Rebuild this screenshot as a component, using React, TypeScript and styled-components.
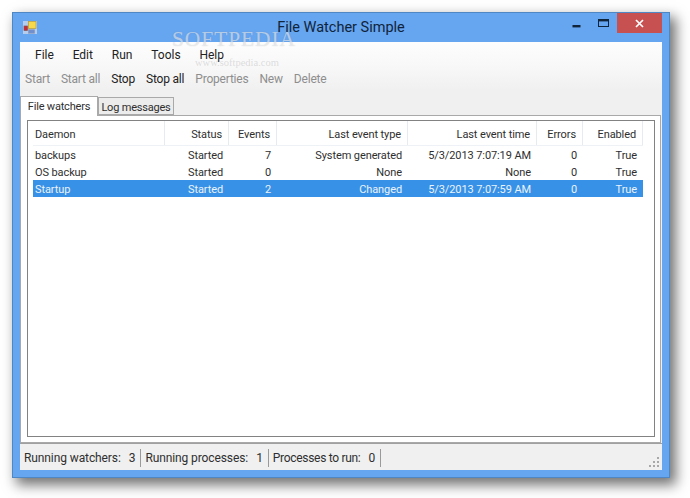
import styled, { createGlobalStyle } from "styled-components"

const Global = createGlobalStyle`
    html, body {
        margin: 0;
        padding: 0;
        background: #fff;
    }
    body {
        font-family: Roboto, "Liberation Sans", sans-serif;
        font-size: 12px;
        letter-spacing: -0.1px;
        color: #2f2f2f;
    }
`

const Page = styled.div`
    width: 690px;
    height: 498px;
    padding: 12px 0 0 12px;
    box-sizing: border-box;
    overflow: hidden;
    position: relative;
`

const Window = styled.div`
    width: 658px;
    height: 466px;
    box-sizing: border-box;
    display: flex;
    flex-direction: column;
    background: #66a5f0;
    border: 1px solid #4f86c4;
    box-shadow: 5px 6px 12px 1px rgba(0, 0, 0, 0.55);
    padding: 0 7px 7px;
`

const TitleBar = styled.div`
    height: 29px;
    flex: none;
    display: flex;
    align-items: flex-start;
    position: relative;
`

const AppIcon = styled.svg`
    width: 14px;
    height: 14px;
    margin: 8px 0 0 3px;
`

const Title = styled.div`
    position: absolute;
    left: 0;
    right: 0;
    top: 5px;
    text-align: center;
    font-size: 14.5px;
    letter-spacing: 0;
    line-height: 20px;
    color: #10243a;
`

const Controls = styled.div`
    margin-left: auto;
    display: flex;
    align-items: flex-start;
`

const ControlButton = styled.div<{ $close?: boolean }>`
    width: ${p => (p.$close ? 45 : 27)}px;
    height: 20px;
    display: flex;
    align-items: center;
    justify-content: center;
    background: ${p => (p.$close ? "#c75050" : "transparent")};
`

const Client = styled.div`
    flex: 1;
    min-height: 0;
    display: flex;
    flex-direction: column;
    background: #f0f0f0;
`

const TopBars = styled.div`
    height: 48px;
    flex: none;
    padding-top: 1px;
    box-sizing: border-box;
    background: linear-gradient(#fdfdfd 0%, #f8f8f8 50%, #f0f0f0 100%);
`

const MenuBar = styled.div`
    height: 24px;
    display: flex;
    align-items: center;
    padding-left: 15px;
    gap: 18.8px;
    letter-spacing: 0;
    color: #222;
`

const MenuItem = styled.span``

const ToolBar = styled.div`
    height: 23px;
    display: flex;
    align-items: center;
    padding-left: 5px;
    gap: 11px;
    letter-spacing: -0.2px;
`

const ToolButton = styled.span<{ $off?: boolean }>`
    color: ${p => (p.$off ? "#8e8e8e" : "#222")};
`

const Tabs = styled.div`
    flex: none;
    height: 25px;
    display: flex;
    align-items: flex-end;
    padding-top: 6px;
    box-sizing: border-box;
    font-size: 11px;
    letter-spacing: -0.2px;
`

const Tab = styled.div<{ $active?: boolean }>`
    box-sizing: border-box;
    height: ${p => (p.$active ? 20 : 18)}px;
    width: ${p => (p.$active ? 78 : 76)}px;
    margin-bottom: ${p => (p.$active ? -1 : 0)}px;
    padding: ${p => (p.$active ? "0 0 1px" : "2px 0 0")};
    display: flex;
    align-items: center;
    justify-content: center;
    white-space: nowrap;
    background: ${p => (p.$active ? "#fff" : "#ececec")};
    border: 1px solid #a9a9a9;
    border-bottom: ${p => (p.$active ? "none" : "1px solid #a9a9a9")};
    position: relative;
    z-index: ${p => (p.$active ? 1 : 0)};
`

const TabPanel = styled.div`
    flex: 1;
    min-height: 0;
    background: #fff;
    border: 1px solid #a9a9a9;
    margin-right: 1px;
    padding: 4px 5px 5px 6px;
    display: flex;
`

const List = styled.div`
    flex: 1;
    border: 1px solid #828282;
    padding: 0 11px 0 5px;
    background: #fff;
    font-size: 11px;
`

const Row = styled.div<{ $head?: boolean; $selected?: boolean }>`
    display: grid;
    grid-template-columns: 132px 64px 48px 131px 129px 46px 60px;
    height: ${p => (p.$head ? 24 : 17)}px;
    align-items: stretch;
    background: ${p => (p.$selected ? "#3791e6" : "transparent")};
    color: ${p => (p.$selected ? "#eaf3fc" : "#2f2f2f")};
    border-bottom: ${p => (p.$head ? "1px solid #eef2f6" : "none")};
`

const Cell = styled.div<{ $head?: boolean; $left?: boolean }>`
    display: flex;
    align-items: center;
    justify-content: ${p => (p.$left ? "flex-start" : "flex-end")};
    padding: ${p => (p.$left ? "0 0 0 2px" : "0 6px 0 0")};
    padding-top: ${p => (p.$head ? 2 : 1)}px;
    white-space: nowrap;
    border-right: ${p => (p.$head ? "1px solid #e6ebf0" : "none")};
    box-sizing: border-box;
`

const StatusBar = styled.div`
    height: 27px;
    flex: none;
    border-top: 1px solid #a0a0a0;
    display: flex;
    align-items: center;
    padding: 1px 0 0 4px;
    box-sizing: border-box;
    position: relative;
    background: #f0f0f0;
`

const StatusPane = styled.div<{ $tight?: boolean }>`
    height: 18px;
    box-sizing: border-box;
    display: flex;
    align-items: center;
    gap: 8px;
    padding: 1px 5px 0 0;
    margin-right: 4px;
    border-right: 1px solid #9a9a9a;
    white-space: nowrap;
    letter-spacing: ${p => (p.$tight ? "-0.3px" : "-0.1px")};
`

const Grip = styled.svg`
    position: absolute;
    right: 1px;
    bottom: 1px;
    width: 12px;
    height: 12px;
`

const Watermark = styled.div`
    position: absolute;
    left: 172px;
    top: 27px;
    font-family: "Liberation Serif", serif;
    font-size: 21.5px;
    letter-spacing: 0.9px;
    line-height: 24px;
    color: rgba(255, 255, 255, 0.5);
    text-shadow: 0 0 1px rgba(120, 130, 140, 0.4);
    pointer-events: none;
`

const WatermarkUrl = styled.div`
    position: absolute;
    left: 195px;
    top: 56px;
    font-family: "Liberation Serif", serif;
    font-size: 10.5px;
    letter-spacing: 0;
    line-height: 14px;
    color: rgba(150, 150, 150, 0.3);
    pointer-events: none;
`

const columns = ["Daemon", "Status", "Events", "Last event type", "Last event time", "Errors", "Enabled"]

const rows = [
    ["backups", "Started", "7", "System generated", "5/3/2013 7:07:19 AM", "0", "True"],
    ["OS backup", "Started", "0", "None", "None", "0", "True"],
    ["Startup", "Started", "2", "Changed", "5/3/2013 7:07:59 AM", "0", "True"],
]

const tools: [string, boolean][] = [
    ["Start", true],
    ["Start all", true],
    ["Stop", false],
    ["Stop all", false],
    ["Properties", true],
    ["New", true],
    ["Delete", true],
]

const App = () => {
    return (
        <Page>
            <Global />
            <Window>
                <TitleBar>
                    <AppIcon viewBox="0 0 14 14">
                        <rect x="0" y="0" width="14" height="13" fill="#c9d6e8" opacity="0.8" />
                        <rect x="1" y="5" width="3.5" height="4.5" fill="#d8232a" stroke="#7a5a5a" strokeWidth="0.7" />
                        <rect x="5.5" y="0.5" width="7.5" height="7" fill="#f5d94a" stroke="#b39a3a" strokeWidth="0.7" />
                        <rect x="5.5" y="8.8" width="6" height="3.4" fill="#6f8fd0" stroke="#8a9ab8" strokeWidth="0.7" />
                    </AppIcon>
                    <Title>File Watcher Simple</Title>
                    <Controls>
                        <ControlButton>
                            <svg width="9" height="20" viewBox="0 0 9 20"><rect x="0.5" y="12" width="8" height="2.4" fill="#10243a" /></svg>
                        </ControlButton>
                        <ControlButton>
                            <svg width="11" height="20" viewBox="0 0 11 20"><rect x="0.5" y="6.5" width="10" height="7" fill="none" stroke="#10243a" /><rect x="0" y="6" width="11" height="2.4" fill="#10243a" /></svg>
                        </ControlButton>
                        <ControlButton $close>
                            <svg width="9" height="9" viewBox="0 0 9 9"><path d="M1 1L8 8M8 1L1 8" stroke="#fff" strokeWidth="1.7" /></svg>
                        </ControlButton>
                    </Controls>
                </TitleBar>
                <Client>
                    <TopBars>
                        <MenuBar>
                            {["File", "Edit", "Run", "Tools", "Help"].map(m => <MenuItem key={m}>{m}</MenuItem>)}
                        </MenuBar>
                        <ToolBar>
                            {tools.map(([name, off]) => <ToolButton key={name} $off={off}>{name}</ToolButton>)}
                        </ToolBar>
                    </TopBars>
                    <Tabs>
                        <Tab $active>File watchers</Tab>
                        <Tab>Log messages</Tab>
                    </Tabs>
                    <TabPanel>
                        <List>
                            <Row $head>
                                {columns.map((c, i) => <Cell key={c} $head $left={i === 0}>{c}</Cell>)}
                            </Row>
                            {rows.map((r, i) => (
                                <Row key={r[0]} $selected={i === 2}>
                                    {r.map((v, j) => <Cell key={j} $left={j === 0}>{v}</Cell>)}
                                </Row>
                            ))}
                        </List>
                    </TabPanel>
                    <StatusBar>
                        <StatusPane><span>Running watchers:</span><span>3</span></StatusPane>
                        <StatusPane><span>Running processes:</span><span>1</span></StatusPane>
                        <StatusPane $tight><span>Processes to run:</span><span>0</span></StatusPane>
                        <Grip viewBox="0 0 12 12" fill="#a8a8a8">
                            <rect x="8" y="0" width="2" height="2" />
                            <rect x="4" y="4" width="2" height="2" />
                            <rect x="8" y="4" width="2" height="2" />
                            <rect x="0" y="8" width="2" height="2" />
                            <rect x="4" y="8" width="2" height="2" />
                            <rect x="8" y="8" width="2" height="2" />
                        </Grip>
                    </StatusBar>
                </Client>
            </Window>
            <Watermark>SOFTPEDIA</Watermark>
            <WatermarkUrl>www.softpedia.com</WatermarkUrl>
        </Page>
    )
}

export default App
